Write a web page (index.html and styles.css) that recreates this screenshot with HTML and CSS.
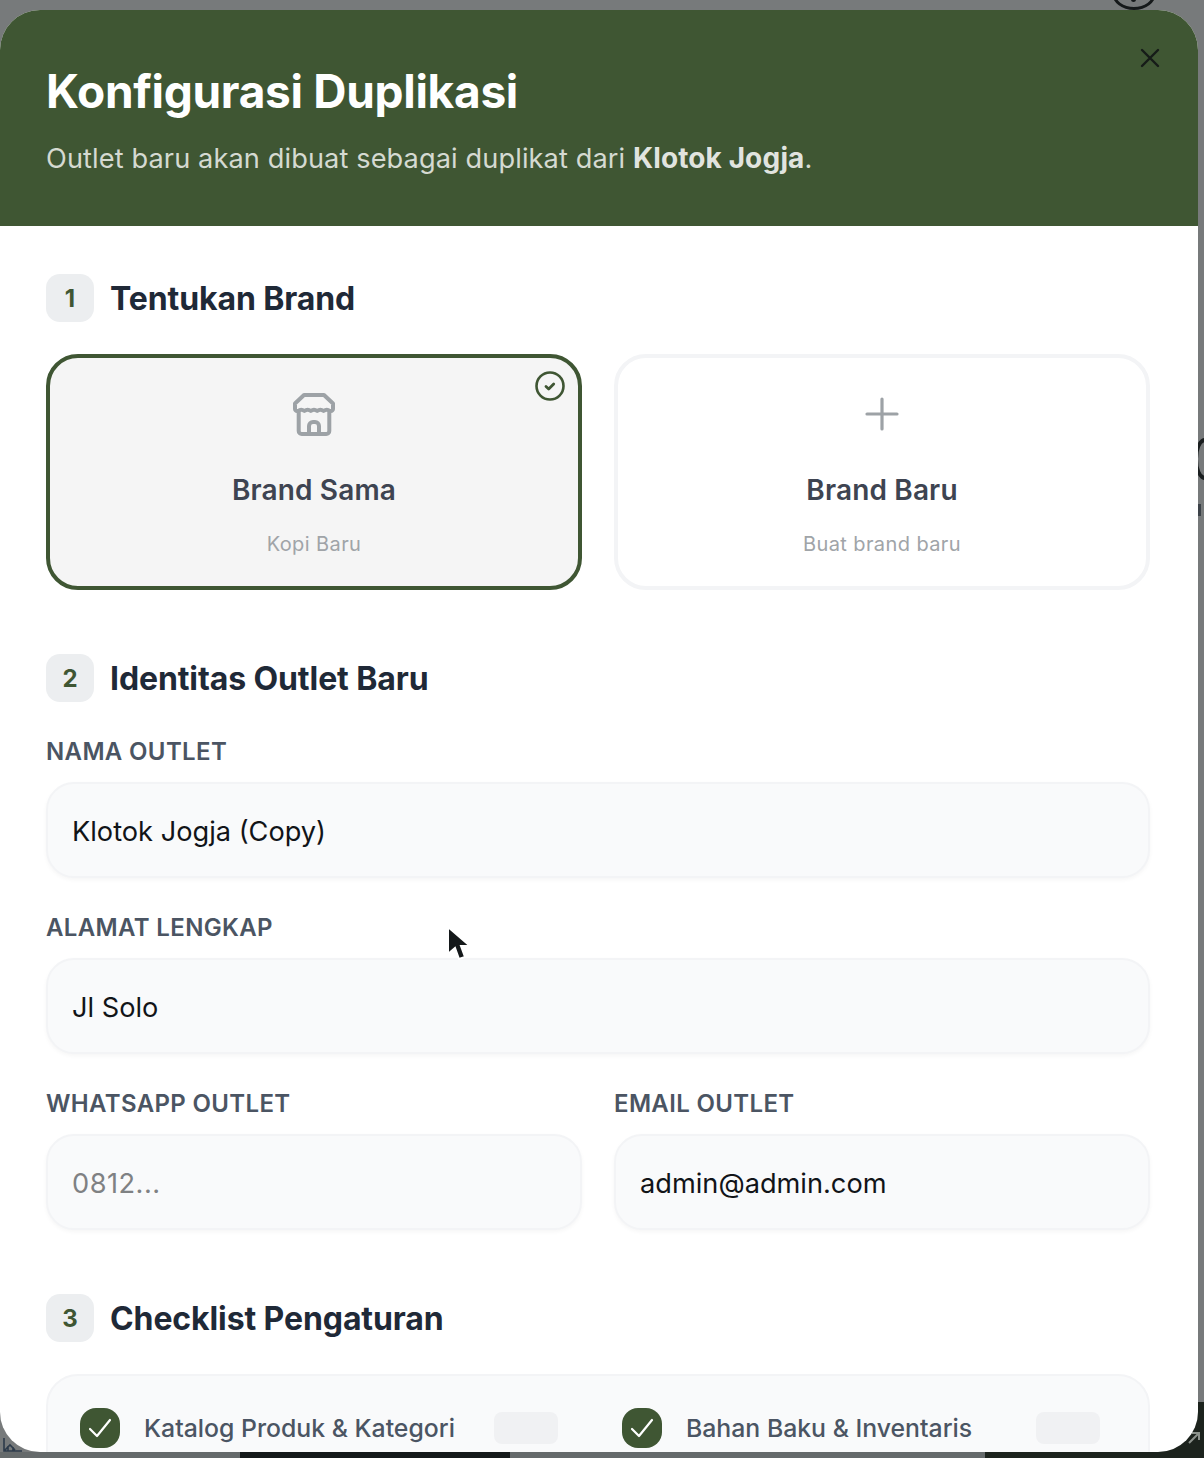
FILE: index.html
```html
<!DOCTYPE html>
<html lang="id">
<head>
  <meta charset="UTF-8" />
  <title>Konfigurasi Duplikasi</title>
  <link rel="stylesheet" href="styles.css">
</head>
<body>

  <!-- Halaman di belakang modal -->
  <div class="behind behind-ring"><span></span></div>
  <div class="behind behind-bottom"></div>
  <div class="behind behind-dark-left"></div>
  <div class="behind behind-dark-right"></div>
  <div class="behind behind-curve"></div>
  <div class="behind behind-edge"></div>
  <svg class="behind behind-icon" width="24" height="24" viewBox="0 0 24 24" fill="none" stroke="#2c3a4a" stroke-width="1.600">
    <path d="M2 8v13h18M2 21l6-6 5 5M6 21v-5M11 21v-4"/>
  </svg>
  <svg class="behind behind-arrow" width="16" height="16" viewBox="0 0 16 16" fill="none" stroke="#8b918b" stroke-width="2">
    <path d="M3 13L13 3M6 3h7v7"/>
  </svg>

  <div class="modal">
    <header class="modal-head">
      <h1>Konfigurasi Duplikasi</h1>
      <p>Outlet baru akan dibuat sebagai duplikat dari <b>Klotok Jogja</b>.</p>
      <svg class="close" width="24" height="24" viewBox="0 0 24 24" fill="none" stroke="currentColor" stroke-width="2.4" stroke-linecap="round">
        <path d="M4 4l16 16M20 4L4 20"/>
      </svg>
    </header>

    <div class="modal-body">
      <!-- Langkah 1 -->
      <div class="step">
        <span class="step-no">1</span>
        <h2>Tentukan Brand</h2>
      </div>
      <div class="cards">
        <div class="card card-active">
          <svg class="card-check" width="32" height="32" viewBox="0 0 32 32" fill="none" stroke="currentColor">
            <circle cx="16" cy="16" r="13.5" stroke-width="2.6"/>
            <path d="M12 16.500l2.700 2.500 5-5" stroke-width="2.800" stroke-linecap="round" stroke-linejoin="round"/>
          </svg>
          <svg class="card-icon" width="48" height="48" viewBox="0 0 48 48" fill="none" stroke="currentColor" stroke-width="4" stroke-linecap="round" stroke-linejoin="round">
            <path d="M14 5h20l9 8.500V19c0 1-1 2-2 2h-1q-3.200-2.400-6.400 0q-3.200-2.400-6.400 0q-3.200-2.400-6.400 0q-3.200-2.400-6.400 0q-3.200-2.400-6.400 0H7c-1 0-2-1-2-2v-5.500z"/>
            <path d="M8.700 22v19a3 3 0 0 0 3 3h24.600a3 3 0 0 0 3-3V22"/>
            <path d="M19 43v-7a4 4 0 0 1 4-4h2a4 4 0 0 1 4 4v7"/>
          </svg>
          <strong>Brand Sama</strong>
          <small>Kopi Baru</small>
        </div>
        <div class="card">
          <svg class="card-icon" width="48" height="48" viewBox="0 0 48 48" fill="none" stroke="currentColor" stroke-width="3.200" stroke-linecap="round">
            <path d="M24 9v30M9 24h30"/>
          </svg>
          <strong>Brand Baru</strong>
          <small>Buat brand baru</small>
        </div>
      </div>

      <!-- Langkah 2 -->
      <div class="step">
        <span class="step-no">2</span>
        <h2>Identitas Outlet Baru</h2>
      </div>
      <div class="field">
        <label for="nama">NAMA OUTLET</label>
        <input id="nama" type="text" value="Klotok Jogja (Copy)">
      </div>
      <div class="field">
        <label for="alamat">ALAMAT LENGKAP</label>
        <input id="alamat" type="text" value="Jl Solo">
      </div>
      <div class="field-row">
        <div class="field">
          <label for="wa">WHATSAPP OUTLET</label>
          <input id="wa" type="text" placeholder="0812...">
        </div>
        <div class="field">
          <label for="email">EMAIL OUTLET</label>
          <input id="email" type="text" value="admin@admin.com">
        </div>
      </div>

      <!-- Langkah 3 -->
      <div class="step step-last">
        <span class="step-no">3</span>
        <h2>Checklist Pengaturan</h2>
      </div>
      <div class="checklist">
        <div class="check-item">
          <span class="check-box">
            <svg width="24" height="24" viewBox="0 0 24 24" fill="none" stroke="#fff" stroke-width="2.200" stroke-linecap="round" stroke-linejoin="round"><path d="M2 13l7 7L22 4"/></svg>
          </span>
          <span class="check-label">Katalog Produk &amp; Kategori</span>
          <span class="skeleton"></span>
        </div>
        <div class="check-item">
          <span class="check-box">
            <svg width="24" height="24" viewBox="0 0 24 24" fill="none" stroke="#fff" stroke-width="2.200" stroke-linecap="round" stroke-linejoin="round"><path d="M2 13l7 7L22 4"/></svg>
          </span>
          <span class="check-label">Bahan Baku &amp; Inventaris</span>
          <span class="skeleton"></span>
        </div>
      </div>
    </div>
  </div>

  <!-- Kursor -->
  <svg class="cursor" width="26" height="36" viewBox="0 0 26 36">
    <path d="M2 1v27l7-6 4 11 6-2-4-11h9z" fill="#14181a" stroke="#fff" stroke-width="2"/>
  </svg>

</body>
</html>
```

FILE: styles.css
```css
/* ---------- Latar ---------- */
html,body{margin:0;padding:0}
body{
  position:relative;
  width:1204px;
  height:1458px;
  overflow:hidden;
  padding-top:10px;
  box-sizing:border-box;
  background:#777a7b;
  font-family:Inter,"Liberation Sans",sans-serif;
}

/* ---------- Potongan halaman belakang ---------- */
.behind{position:absolute}
.behind-ring{
  left:1112px;top:-24px;
  width:44px;height:34px;
  box-sizing:border-box;
  border:3px solid #15191a;
  border-radius:50%;
}
.behind-ring span{
  position:absolute;
  left:16px;top:18px;
  width:5px;height:5px;
  border-radius:50%;
  background:#15191a;
}
.behind-bottom{left:0;top:1452px;width:1204px;height:6px;background:#656a6b}
.behind-dark-left{left:240px;top:1452px;width:270px;height:6px;background:#14191a}
.behind-dark-right{left:985px;top:1402px;width:219px;height:56px;background:#1c231d}
.behind-curve{
  left:1194px;top:438px;
  width:22px;height:42px;
  box-sizing:border-box;
  border:4px solid #1a1e1f;
  border-radius:50%;
}
.behind-edge{left:1198px;top:504px;width:3px;height:12px;background:#3c4248}
.behind-icon{left:2px;top:1430px}
.behind-arrow{left:1186px;top:1430px}

/* ---------- Modal ---------- */
.modal{
  position:relative;
  width:1198px;
  height:1442px;
  overflow:hidden;
  border-radius:40px;
  background:#fff;
}
.modal-head{
  position:relative;
  box-sizing:border-box;
  height:216px;
  padding:53px 46px 0;
  background:#3f5633;
  color:#fff;
}
.modal-head h1{
  margin:0;
  font-size:46px;
  line-height:56px;
  font-weight:700;
  letter-spacing:-.3px;
}
.modal-head p{
  margin:19px 0 0;
  font-size:27.2px;
  line-height:40px;
  color:rgba(255,255,255,.78);
  letter-spacing:.1px;
}
.modal-head b{font-size:28px;font-weight:700;color:rgba(255,255,255,.85)}
.close{position:absolute;top:36px;right:36px;color:#161b18}

.modal-body{padding:48px 48px 0 46px}

/* ---------- Judul langkah ---------- */
.step{display:flex;align-items:center;gap:16px;margin-bottom:32px}
.step-no{
  width:48px;height:48px;
  display:flex;align-items:center;justify-content:center;
  border-radius:14px;
  background:#eceef0;
  color:#3f5633;
  font-size:24px;
  font-weight:700;
}
.step h2{
  margin:0;
  padding-top:2px;
  font-size:32px;
  line-height:46px;
  font-weight:700;
  letter-spacing:-.1px;
  color:#1f2937;
}
.step-last{margin-top:64px}

/* ---------- Kartu brand ---------- */
.cards{display:grid;grid-template-columns:536px 536px;gap:32px;margin-bottom:64px}
.card{
  position:relative;
  box-sizing:border-box;
  height:236px;
  padding:32px 0 0;
  display:flex;
  flex-direction:column;
  align-items:center;
  border:4px solid #f3f4f6;
  border-radius:32px;
  background:#fff;
}
.card-active{border-color:#3f5633;background:#f5f5f5}
.card-icon{color:#9da2a6;display:block}
.card strong{
  margin-top:32px;
  font-size:28px;
  line-height:40px;
  font-weight:600;
  letter-spacing:.15px;
  color:#3e4451;
}
.card small{
  margin-top:20px;
  font-size:20px;
  line-height:28px;
  color:#a0a4a8;
  letter-spacing:.4px;
}
.card-check{position:absolute;top:12px;right:12px;color:#3f5633}

/* ---------- Form ---------- */
.field{margin-bottom:32px}
.field label{
  display:block;
  padding-top:2px;
  margin-bottom:14px;
  font-size:24px;
  line-height:32px;
  font-weight:600;
  letter-spacing:.35px;
  color:#4b5563;
}
.field input{
  display:block;
  box-sizing:border-box;
  width:100%;
  height:96px;
  padding:2px 24px 0;
  border:2px solid #f3f4f6;
  border-radius:28px;
  background:#f9fafb;
  box-shadow:0 2px 4px rgba(0,0,0,.04);
  font-family:inherit;
  font-size:27.2px;
  color:#111418;
  outline:0;
}
.field input::placeholder{color:#7f8183;opacity:1;letter-spacing:.5px}
.field-row{display:grid;grid-template-columns:536px 536px;gap:32px}
.field-row .field{margin-bottom:0}

/* ---------- Checklist ---------- */
.checklist{
  box-sizing:border-box;
  display:grid;
  grid-template-columns:478px 478px;
  gap:64px;
  height:140px;
  padding:32px;
  border:2px solid #f3f4f6;
  border-radius:32px;
  background:#f9fafb;
}
.check-item{display:flex;align-items:flex-start}
.check-box{
  flex:none;
  width:40px;height:40px;
  display:flex;align-items:center;justify-content:center;
  border-radius:16px;
  background:#3f5633;
}
.check-label{
  margin-left:24px;
  font-size:24.8px;
  line-height:40px;
  font-weight:500;
  color:#4b5563;
}
.skeleton{
  margin:4px 0 0 auto;
  width:64px;height:32px;
  border-radius:8px;
  background:#f0f1f3;
}

/* ---------- Kursor ---------- */
.cursor{position:absolute;left:446px;top:926px}
```
